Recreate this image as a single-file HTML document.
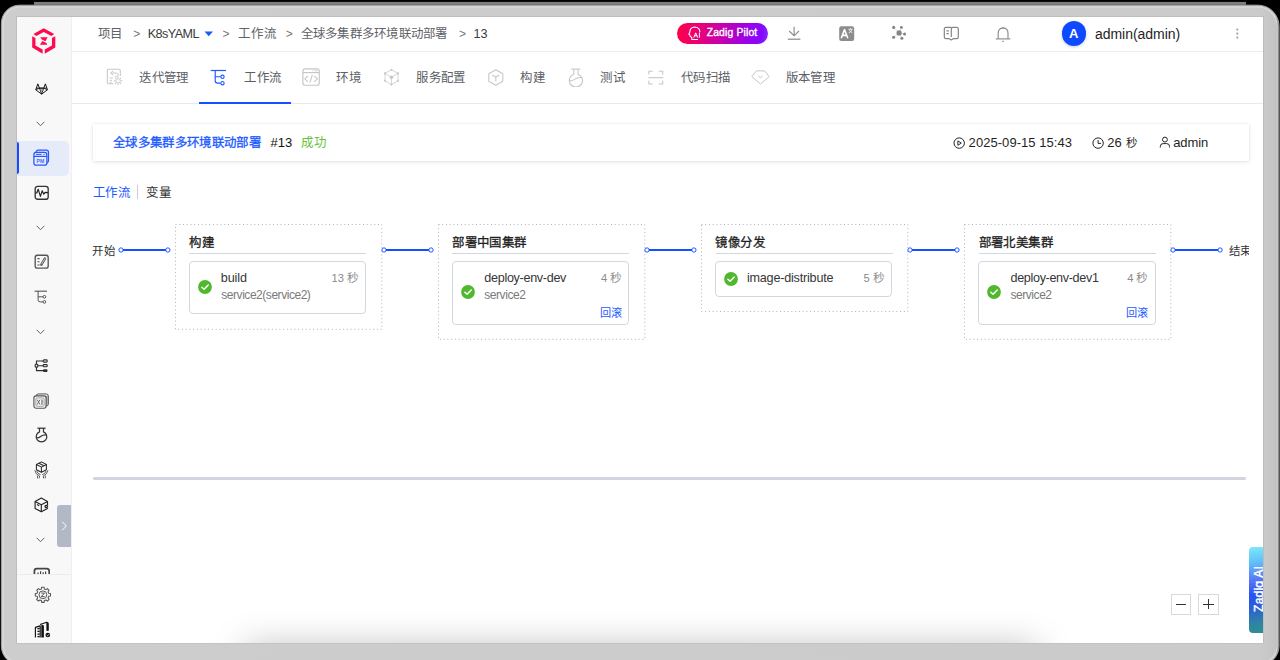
<!DOCTYPE html>
<html lang="zh-CN">
<head>
<meta charset="utf-8">
<title>Zadig - 工作流</title>
<style>
*{box-sizing:border-box;margin:0;padding:0}
html,body{width:1280px;height:660px;overflow:hidden;background:#000;font-family:"Liberation Sans",sans-serif}
#page{position:relative;width:1280px;height:660px;overflow:hidden;background:#000}
.a{position:absolute;display:block}
.t{position:absolute;white-space:nowrap;line-height:20px;height:20px}
.app{left:17px;top:17px;width:1246px;height:626px;background:#fff}
.side{left:17px;top:17px;width:54.5px;height:626px;background:#f8f8f8;border-right:1px solid #efefef}
.job{border:1px solid #d3d7df;border-radius:4px;background:#fff}
.clip{position:absolute;left:71.5px;top:210px;width:1177.8px;height:160px;overflow:hidden}
.clip>.in{position:absolute;left:-71.5px;top:-210px;width:1280px;height:660px}
</style>
</head>
<body>
<div id="page">
<svg class="a" style="left:0;top:0" width="1280" height="660" viewBox="0 0 1280 660">
<defs><linearGradient id="tb" x1="0" y1="0" x2="0" y2="1"><stop offset="0" stop-color="#707070"/><stop offset="0.35" stop-color="#8c8c8c"/><stop offset="1" stop-color="#474747"/></linearGradient>
<linearGradient id="fr" x1="0" y1="0" x2="1" y2="0"><stop offset="0" stop-color="#cdcdcd"/><stop offset="0.985" stop-color="#cbcbcb"/><stop offset="0.9972" stop-color="#c4c4c4"/><stop offset="0.9992" stop-color="#8c8c8c"/><stop offset="1" stop-color="#5a5a5a"/></linearGradient></defs>
<rect x="34" y="1.9" width="1212" height="3.4" fill="url(#tb)"/>
<path d="M19.4 5.2 H1258 A21 21 0 0 1 1279 26.2 V646 A19 19 0 0 1 1260 665 H20.4 A19 19 0 0 1 1.4 646 V23.2 A18 18 0 0 1 19.4 5.2 Z" fill="url(#fr)" stroke="#a6a6a6" stroke-width="1"/>
<path d="M19.5 7.1 H1257.8999999999999 A19.2 19.2 0 0 1 1277.1 26.299999999999997 V645.9 A17.2 17.2 0 0 1 1259.8999999999999 663.1 H20.5 A17.2 17.2 0 0 1 3.3 645.9 V23.299999999999997 A16.2 16.2 0 0 1 19.5 7.1 Z" fill="none" stroke="#d9d9d9" stroke-width="1.4" opacity="0.9"/>
<rect x="16.4" y="16.4" width="1247.2" height="626.7" fill="none" stroke="#b9b9b9" stroke-width="0.7"/>
</svg>
<div class="a app"></div>
<div class="a side"></div>
<!-- shadow of off-screen panel at the bottom -->
<div class="a" style="left:72px;top:600px;width:1191px;height:43px;overflow:hidden"><div style="position:absolute;left:174px;top:46.5px;width:790px;height:40px;box-shadow:0 0 36px rgba(0,0,0,.27)"></div></div>
<!-- top bar / tab bar borders -->
<div class="a" style="left:72px;top:50.6px;width:1191px;height:1px;background:#ebecef"></div>
<div class="a" style="left:72px;top:103px;width:1191px;height:1px;background:#e9eaed"></div>
<div class="a" style="left:198.8px;top:101.6px;width:92.3px;height:2.2px;background:#1450ff"></div>
<!-- info card -->
<div class="a" style="left:92.6px;top:124px;width:1156.7px;height:36.6px;background:#fff;border-radius:1px;box-shadow:0 1px 4px rgba(0,0,0,.10),0 0 2.5px rgba(0,0,0,.07)"></div>
<!-- sub tab divider -->
<div class="a" style="left:136.6px;top:185px;width:1px;height:14px;background:#c8ccd3"></div>
<!-- scroll bar -->
<div class="a" style="left:92.5px;top:476.6px;width:1153.7px;height:3.4px;border-radius:2px;background:#d2d5e1"></div>
<!-- zoom buttons -->
<div class="a" style="left:1170.6px;top:594px;width:20.6px;height:20.6px;border:1px solid #d9d9d9;background:#fff"></div>
<div class="a" style="left:1198.2px;top:594px;width:20.6px;height:20.6px;border:1px solid #d9d9d9;background:#fff"></div>
<div class="a" style="left:1175.6px;top:603.6px;width:10.6px;height:1.3px;background:#333"></div>
<div class="a" style="left:1203.4px;top:603.6px;width:10.4px;height:1.3px;background:#333"></div>
<div class="a" style="left:1207.9px;top:599px;width:1.3px;height:10.4px;background:#333"></div>
<!-- Zadig AI tab -->
<div class="a" style="left:1249px;top:546.8px;width:14px;height:86.6px;border-radius:4px 0 0 4px;background:linear-gradient(172deg,#7ceaf8 0%,#62c0f9 18%,#5a78f7 38%,#2852f2 55%,#2b5fd6 70%,#2f84a2 88%,#2e8e92 100%);overflow:hidden"><div style="position:absolute;left:-33.2px;top:34px;width:86.6px;height:16px;line-height:16px;transform:rotate(-90deg);color:#fff;font-weight:400;-webkit-text-stroke:0.45px #fff;font-size:12.3px;letter-spacing:0.1px;text-align:center;white-space:nowrap" id="zai">Zadig AI</div></div>
<!-- sidebar expand handle -->
<div class="a" style="left:57px;top:504.8px;width:14px;height:42px;border-radius:3px 0 0 3px;background:#b3b8c6"></div>
<svg class="a" style="left:60px;top:520px" width="9" height="12" viewBox="0 0 9 12"><path d="M2.3 1.8 L6.3 6 L2.3 10.2" fill="none" stroke="#fff" stroke-width="1" /></svg>
<!-- workflow area (clipped) -->
<div class="clip"><div class="in">
<svg class="a" style="left:173.5px;top:222.7px" width="209.3" height="107.8"><rect x="1.5" y="1.5" width="206.3" height="104.8" fill="none" stroke="#aeb3bd" stroke-width="1" stroke-dasharray="1 2.75"/></svg>
<div class="a" style="left:189.4px;top:253px;width:177px;height:1px;background:#d3d7e0"></div>
<div class="a job" style="left:189.20000000000002px;top:260.6px;width:177.2px;height:53.800000000000004px"></div>
<svg class="a" style="left:198.0px;top:280.20000000000005px" width="14" height="14" viewBox="0 0 14 14"><circle cx="7" cy="7" r="6.9" fill="#4fb82c"/><path d="M3.9 7.2 L6.1 9.3 L10.2 5" fill="none" stroke="#fff" stroke-width="1.5" stroke-linecap="round" stroke-linejoin="round"/></svg>
<svg class="a" style="left:436.5px;top:222.7px" width="209.3" height="117.8"><rect x="1.5" y="1.5" width="206.3" height="114.8" fill="none" stroke="#aeb3bd" stroke-width="1" stroke-dasharray="1 2.75"/></svg>
<div class="a" style="left:452.4px;top:253px;width:177px;height:1px;background:#d3d7e0"></div>
<div class="a job" style="left:452.2px;top:260.6px;width:177.2px;height:64.39999999999999px"></div>
<svg class="a" style="left:461.0px;top:285.40000000000003px" width="14" height="14" viewBox="0 0 14 14"><circle cx="7" cy="7" r="6.9" fill="#4fb82c"/><path d="M3.9 7.2 L6.1 9.3 L10.2 5" fill="none" stroke="#fff" stroke-width="1.5" stroke-linecap="round" stroke-linejoin="round"/></svg>
<svg class="a" style="left:699.6px;top:222.7px" width="209.3" height="90"><rect x="1.5" y="1.5" width="206.3" height="87" fill="none" stroke="#aeb3bd" stroke-width="1" stroke-dasharray="1 2.75"/></svg>
<div class="a" style="left:715.5px;top:253px;width:177px;height:1px;background:#d3d7e0"></div>
<div class="a job" style="left:715.3px;top:260.6px;width:177.2px;height:36.6px"></div>
<svg class="a" style="left:724.1px;top:271.6px" width="14" height="14" viewBox="0 0 14 14"><circle cx="7" cy="7" r="6.9" fill="#4fb82c"/><path d="M3.9 7.2 L6.1 9.3 L10.2 5" fill="none" stroke="#fff" stroke-width="1.5" stroke-linecap="round" stroke-linejoin="round"/></svg>
<svg class="a" style="left:962.7px;top:222.7px" width="209.3" height="117.8"><rect x="1.5" y="1.5" width="206.3" height="114.8" fill="none" stroke="#aeb3bd" stroke-width="1" stroke-dasharray="1 2.75"/></svg>
<div class="a" style="left:978.6px;top:253px;width:177px;height:1px;background:#d3d7e0"></div>
<div class="a job" style="left:978.4px;top:260.6px;width:177.2px;height:64.39999999999999px"></div>
<svg class="a" style="left:987.2px;top:285.40000000000003px" width="14" height="14" viewBox="0 0 14 14"><circle cx="7" cy="7" r="6.9" fill="#4fb82c"/><path d="M3.9 7.2 L6.1 9.3 L10.2 5" fill="none" stroke="#fff" stroke-width="1.5" stroke-linecap="round" stroke-linejoin="round"/></svg>
<svg class="a" style="left:116.6px;top:245px" width="54.900000000000006" height="10"><line x1="4" y1="5" x2="50.900000000000006" y2="5" stroke="#1450ff" stroke-width="2"/><circle cx="4" cy="5" r="2.15" fill="#fff" stroke="#1450ff" stroke-width="0.95"/><circle cx="50.900000000000006" cy="5" r="2.15" fill="#fff" stroke="#1450ff" stroke-width="0.95"/></svg>
<svg class="a" style="left:379.7px;top:245px" width="55.0" height="10"><line x1="4" y1="5" x2="51.0" y2="5" stroke="#1450ff" stroke-width="2"/><circle cx="4" cy="5" r="2.15" fill="#fff" stroke="#1450ff" stroke-width="0.95"/><circle cx="51.0" cy="5" r="2.15" fill="#fff" stroke="#1450ff" stroke-width="0.95"/></svg>
<svg class="a" style="left:642.9px;top:245px" width="54.89999999999998" height="10"><line x1="4" y1="5" x2="50.89999999999998" y2="5" stroke="#1450ff" stroke-width="2"/><circle cx="4" cy="5" r="2.15" fill="#fff" stroke="#1450ff" stroke-width="0.95"/><circle cx="50.89999999999998" cy="5" r="2.15" fill="#fff" stroke="#1450ff" stroke-width="0.95"/></svg>
<svg class="a" style="left:906px;top:245px" width="55" height="10"><line x1="4" y1="5" x2="51" y2="5" stroke="#1450ff" stroke-width="2"/><circle cx="4" cy="5" r="2.15" fill="#fff" stroke="#1450ff" stroke-width="0.95"/><circle cx="51" cy="5" r="2.15" fill="#fff" stroke="#1450ff" stroke-width="0.95"/></svg>
<svg class="a" style="left:1169.1px;top:245px" width="55.100000000000136" height="10"><line x1="4" y1="5" x2="51.100000000000136" y2="5" stroke="#1450ff" stroke-width="2"/><circle cx="4" cy="5" r="2.15" fill="#fff" stroke="#1450ff" stroke-width="0.95"/><circle cx="51.100000000000136" cy="5" r="2.15" fill="#fff" stroke="#1450ff" stroke-width="0.95"/></svg>
</div></div>
<div class="a" style="left:17px;top:140.8px;width:52.2px;height:35px;background:#e6ebf9;border-radius:0 5px 5px 0"></div>
<div class="a" style="left:17.2px;top:142.4px;width:2.1px;height:31.6px;background:#1a4cff;border-radius:0 2px 2px 0"></div>
<div class="a" style="left:17px;top:573.6px;width:54px;height:1px;background:#ececec"></div>
<svg class="a" style="left:32px;top:28.1px" width="23.6" height="26.2" viewBox="0 0 24 26.2"><g fill="#ff0a4e">
<path d="M11.9 0 L22.6 5.9 L19.7 7.8 L11.9 3.9 L4.4 7.8 L1.5 5.9 Z"/>
<path d="M0.2 8.1 L3.5 9.9 L3.5 17.6 L10.8 21.7 L10.8 25.9 L0.2 19.5 Z"/>
<path d="M23.7 8.1 L20.3 9.9 L20.3 17.6 L13 21.7 L13 25.9 L23.7 19.5 Z"/>
<path d="M8.4 9.2 L15.8 9.2 L13.8 13.2 L10 11.6 Z"/>
<path d="M8.1 16.9 L15.6 16.9 L14.6 15 L10.6 12.9 Z"/>
</g></svg>
<svg class="a" style="left:34.7px;top:83px" width="13.3" height="12" viewBox="0 0 14 12.6"><g fill="none" stroke="#151515" stroke-width="1.05" stroke-linejoin="round">
<path d="M3 0.9 L0.8 7.1 L6.95 11.7 L13.1 7.1 L10.9 0.9 L9.2 5.4 L4.7 5.4 Z"/>
<path d="M1.4 5.4 H12.5 M4.7 5.4 L6.95 11.7 L9.2 5.4 M0.8 7.1 L4.7 5.4 M13.1 7.1 L9.2 5.4" stroke-width="0.9"/></g>
<path d="M5.6 6.4 H8.3 L6.95 10 Z" fill="#151515" opacity="0.35"/></svg>
<svg class="a" style="left:36px;top:121px" width="9" height="6" viewBox="0 0 9 6"><path d="M0.7 0.8 L4.5 4.7 L8.3 0.8" fill="none" stroke="#5c5c5c" stroke-width="0.95"/></svg>
<svg class="a" style="left:36px;top:225px" width="9" height="6" viewBox="0 0 9 6"><path d="M0.7 0.8 L4.5 4.7 L8.3 0.8" fill="none" stroke="#5c5c5c" stroke-width="0.95"/></svg>
<svg class="a" style="left:36px;top:329px" width="9" height="6" viewBox="0 0 9 6"><path d="M0.7 0.8 L4.5 4.7 L8.3 0.8" fill="none" stroke="#5c5c5c" stroke-width="0.95"/></svg>
<svg class="a" style="left:36px;top:537px" width="9" height="6" viewBox="0 0 9 6"><path d="M0.7 0.8 L4.5 4.7 L8.3 0.8" fill="none" stroke="#5c5c5c" stroke-width="0.95"/></svg>
<svg class="a" style="left:32.6px;top:149.2px" width="17.4" height="17.4" viewBox="0 0 17.4 17.4"><rect x="2.9" y="1.2" width="12.6" height="12.4" rx="2.2" fill="none" stroke="#2457ff" stroke-width="1.2"/>
<rect x="0.9" y="3.4" width="13" height="12.8" rx="2.2" fill="#e6ebf9" stroke="#2457ff" stroke-width="1.25"/>
<path d="M0.9 7.4 H13.9" stroke="#2457ff" stroke-width="1.2"/>
<path d="M3 5.4 H8.6" stroke="#2457ff" stroke-width="1"/><circle cx="11" cy="5.4" r="0.6" fill="#2457ff"/>
<text x="7.4" y="14.3" font-family="Liberation Sans, sans-serif" font-weight="700" font-size="5.1" text-anchor="middle" fill="#2457ff" opacity="0.85">PM</text></svg>
<svg class="a" style="left:33.6px;top:185px" width="15.4" height="15.6" viewBox="0 0 15.4 15.6"><rect x="1.2" y="1.3" width="13" height="13" rx="2.4" fill="none" stroke="#333" stroke-width="1.35"/>
<path d="M1.3 8 L2.8 8 L4.2 4.2 L6.4 11.4 L8.2 5.8 L9.8 9.2 L11 7.4 L14 7.6" fill="none" stroke="#222" stroke-width="1.15" stroke-linejoin="round"/></svg>
<svg class="a" style="left:33.6px;top:254.4px" width="15.4" height="15.6" viewBox="0 0 15.4 15.6"><rect x="1.2" y="1.2" width="13" height="13" rx="2.2" fill="none" stroke="#555" stroke-width="1.35"/>
<path d="M3.4 4.6 H5.6 M3.4 7.8 H5.6 M3.4 11 H5.6" stroke="#555" stroke-width="1.1"/>
<path d="M10.9 4.6 L7.4 10.6" stroke="#555" stroke-width="2.5" stroke-linecap="round"/>
<path d="M10.9 4.6 L7.8 9.9" stroke="#f8f8f8" stroke-width="0.7" stroke-linecap="round"/></svg>
<svg class="a" style="left:34.4px;top:289.6px" width="14" height="14" viewBox="0 0 14 14"><path d="M0.6 1.2 H13" stroke="#555" stroke-width="1.1"/>
<path d="M4.1 1.2 V9.8 Q4.1 11.9 6.2 11.9 H9 M4.1 6.8 H9" fill="none" stroke="#555" stroke-width="1"/>
<circle cx="10.4" cy="6.8" r="1.35" fill="none" stroke="#555" stroke-width="1"/>
<circle cx="10.4" cy="11.9" r="1.35" fill="none" stroke="#555" stroke-width="1"/></svg>
<svg class="a" style="left:34.4px;top:359.4px" width="14.4" height="14" viewBox="0 0 14.4 14"><g fill="none" stroke="#2e2e2e" stroke-width="1.12">
<rect x="1.2" y="5.3" width="2.6" height="2.8" rx="0.6"/>
<path d="M2.5 5.3 V2 H9 M3.8 6.7 H9 M2.5 8.1 V11.6 H9"/>
<rect x="9.2" y="0.9" width="4" height="2.2" rx="0.8"/>
<rect x="9.2" y="5.6" width="4" height="2.2" rx="0.8"/>
</g><rect x="9" y="10.2" width="4.5" height="2.9" rx="1" fill="#2e2e2e"/></svg>
<svg class="a" style="left:33.4px;top:392.6px" width="16.4" height="16.4" viewBox="0 0 16.4 16.4"><rect x="3.2" y="0.9" width="12.2" height="12.2" rx="2.2" fill="#e4e4e4" stroke="#555" stroke-width="0.95"/>
<path d="M13.4 3 V12.6 M14.4 2.4 V11.6" stroke="#8a8a8a" stroke-width="0.6"/>
<rect x="0.9" y="2.9" width="12.2" height="12.4" rx="2.2" fill="#f8f8f8" stroke="#555" stroke-width="1.15"/>
<rect x="2.9" y="4.9" width="8.2" height="8.4" rx="1.2" fill="none" stroke="#8a8a8a" stroke-width="0.8"/>
<path d="M4.2 6.6 L7 11.6 M7 6.6 L4.2 11.6" stroke="#6a6a6a" stroke-width="1"/><path d="M9 6.4 V11.8" stroke="#6a6a6a" stroke-width="1.2"/></svg>
<svg class="a" style="left:35px;top:427.4px" width="13" height="16.4" viewBox="0 0 13 16.4"><g fill="none" stroke="#333" stroke-width="1.25">
<path d="M2.4 1.2 H10.6"/>
<path d="M4.5 1.2 V4.8 A5.3 5.3 0 1 0 8.5 4.8 V1.2"/>
<path d="M1.4 10.9 Q4 10.9 6 9.2 T11.4 7.8"/></g></svg>
<svg class="a" style="left:34px;top:461px" width="15" height="18" viewBox="0 0 15 18"><g fill="none" stroke="#2a2a2a" stroke-width="1.05" stroke-linejoin="round">
<path d="M7.4 0.9 L12.4 3.5 V8.7 L7.4 11.3 L2.4 8.7 V3.5 Z"/>
<path d="M2.4 3.5 L7.4 6.1 L12.4 3.5 M7.4 6.1 V11.3 M4.9 2.2 L9.9 4.8"/></g>
<g fill="none" stroke="#555" stroke-width="0.95" stroke-linecap="round">
<path d="M0.9 9.6 Q1.6 13.6 5.6 15 L5.2 17 M2.8 10.4 Q3.6 12.8 6.2 13.6 M3.4 15 L3.6 17"/>
<path d="M13.9 9.6 Q13.2 13.6 9.2 15 L9.6 17 M12 10.4 Q11.2 12.8 8.6 13.6 M11.4 15 L11.2 17"/></g></svg>
<svg class="a" style="left:34.2px;top:496.8px" width="15" height="16" viewBox="0 0 15 16"><g fill="none" stroke="#222" stroke-width="1.15" stroke-linejoin="round">
<path d="M7.3 1 L13.5 4.4 V11.4 L7.3 14.8 L1.1 11.4 V4.4 Z"/>
<path d="M1.1 4.4 L7.3 7.8 L13.5 4.4 M7.3 7.8 V14.8 M3 7.6 L5.2 8.8"/></g>
<circle cx="12.2" cy="9.6" r="1.9" fill="#f8f8f8"/><circle cx="12.2" cy="9.6" r="1.25" fill="none" stroke="#111" stroke-width="1.1"/></svg>
<svg class="a" style="left:32.6px;top:566.6px" width="17.6" height="7" viewBox="0 0 17.6 7"><rect x="1.4" y="1.6" width="14.8" height="12" rx="2.4" fill="none" stroke="#444" stroke-width="1.7"/>
<path d="M5 5.6 V7 M7.6 4.2 V7 M10.2 5.2 V7 M12.6 4.6 V7" stroke="#444" stroke-width="1.2"/></svg>
<svg class="a" style="left:34.4px;top:586.4px" width="17.2" height="17.2" viewBox="0 0 17.2 17.2"><path d="M7.70 1.19 L10.10 1.19 L10.39 2.99 L11.95 3.64 L13.43 2.57 L15.13 4.27 L14.06 5.75 L14.71 7.31 L16.51 7.60 L16.51 10.00 L14.71 10.29 L14.06 11.85 L15.13 13.33 L13.43 15.03 L11.95 13.96 L10.39 14.61 L10.10 16.41 L7.70 16.41 L7.41 14.61 L5.85 13.96 L4.37 15.03 L2.67 13.33 L3.74 11.85 L3.09 10.29 L1.29 10.00 L1.29 7.60 L3.09 7.31 L3.74 5.75 L2.67 4.27 L4.37 2.57 L5.85 3.64 L7.41 2.99 Z" fill="none" stroke="#555" stroke-width="1.05" stroke-linejoin="round"/>
<circle cx="8.9" cy="8.8" r="3.9" fill="none" stroke="#555" stroke-width="1"/>
<path d="M7.2 7.1 H10.6 L7.2 10.6 H10.6" fill="none" stroke="#444" stroke-width="0.9"/></svg>
<svg class="a" style="left:30px;top:618px" width="26" height="24" viewBox="0 0 26 24"><g fill="none" stroke="#111" stroke-linejoin="round">
<path d="M5.4 19.4 V9.4 L10.2 7.9 V19.4" stroke-width="1.15"/>
<path d="M7.4 10.8 L9.6 10.3 M7.4 13.4 H9.6 M7.4 16 H9.6 M7.4 18.6 H9.6" stroke-width="1.25"/>
<path d="M10 6.5 L16 4.4 Q18 4 18 6 V12.6" stroke-width="1.1"/>
</g>
<g fill="#111"><path d="M11.3 6.6 L13.9 7.6 V19.4 H11.3 Z"/><path d="M16.4 4.6 H18.5 V12.8 H16.4 Z"/><circle cx="17.8" cy="17" r="2.35"/></g>
<path d="M16.6 17 L17.5 17.9 L19.1 16.2" fill="none" stroke="#f8f8f8" stroke-width="0.8"/></svg><svg class="a" style="left:204.4px;top:30.8px" width="10" height="7" viewBox="0 0 10 7"><path d="M0.5 0.6 H9 L4.75 5.3 Z" fill="#1a5aff"/></svg>
<div class="a" style="left:676.8px;top:22.7px;width:91.3px;height:21.1px;border-radius:11px;background:linear-gradient(97deg,#ff0046 0%,#f0006a 18%,#cc00a4 45%,#a100e0 72%,#8408ff 92%,#8a2aff 100%)"></div>
<svg class="a" style="left:687.6px;top:25.8px" width="13.4" height="15" viewBox="0 0 13.4 15"><path d="M9.6 13.6 H3.8 V11.4 Q1.9 10.6 1.6 8.6 L0.8 8.3 L1.8 6.2 Q1.9 1 6.6 0.9 Q11.6 1 11.9 5.8" fill="none" stroke="#fff" stroke-width="1.05" stroke-linejoin="round" stroke-linecap="round"/>
<path d="M5.9 11.3 L7.7 6.9 L9.5 11.3 M6.6 9.8 H8.8 M11.4 7 V11.3" fill="none" stroke="#fff" stroke-width="1" stroke-linecap="round" stroke-linejoin="round"/></svg>
<svg class="a" style="left:787px;top:26.2px" width="14.4" height="14.4" viewBox="0 0 14.4 14.4"><path d="M7.1 0.8 V9.6 M2.2 5 L7.1 9.8 L12 5" fill="none" stroke="#8a8a8a" stroke-width="1.15"/><path d="M0.8 13.2 H13.4" stroke="#8a8a8a" stroke-width="1.2"/></svg>
<svg class="a" style="left:839px;top:25.8px" width="15.6" height="15.4" viewBox="0 0 15.6 15.4"><rect x="0.2" y="0.2" width="15" height="14.8" rx="2.2" fill="#8c8c8c"/>
<path d="M2.2 12.2 L5.5 3.6 L8.8 12.2 M3.3 9.4 H7.7" fill="none" stroke="#fff" stroke-width="1.55" stroke-linejoin="round"/>
<path d="M9.6 3.2 H13.6 M11.6 2.2 V3.2 M10 3.4 Q11.4 6.4 13.4 6.8 M13.2 3.4 Q11.8 6.4 9.8 6.8" fill="none" stroke="#fff" stroke-width="0.75"/></svg>
<svg class="a" style="left:891px;top:25.4px" width="16" height="16" viewBox="0 0 16 16"><g stroke="#b5b5b5" stroke-width="0.5"><path d="M8.1 7.9 L2.7 2.4 M8.1 7.9 L10.4 2.4 M8.1 7.9 L13.6 9 M8.1 7.9 L10.9 13.3 M8.1 7.9 L2.6 12.3"/></g>
<g fill="#858585"><circle cx="8.1" cy="7.9" r="2.6"/><circle cx="2.7" cy="2.4" r="1.55"/><circle cx="10.4" cy="2.4" r="1.45"/><circle cx="13.6" cy="9" r="1.55"/><circle cx="10.9" cy="13.3" r="1.55"/><circle cx="2.6" cy="12.3" r="1.55"/></g></svg>
<svg class="a" style="left:942.8px;top:26px" width="17" height="15.4" viewBox="0 0 17 15.4"><g fill="none" stroke="#858585" stroke-width="1.2" stroke-linejoin="round">
<path d="M8.3 1.4 H3 Q1.3 1.4 1.3 3.1 V11 Q1.3 12.7 3 12.7 H6.3 L8.3 14 L10.3 12.7 H13.6 Q15.3 12.7 15.3 11 V3.1 Q15.3 1.4 13.6 1.4 H10 Q8.3 1.4 8.3 3.1 V11"/>
<path d="M3.4 4.9 H5.8 M3.4 7.6 H5.8" stroke-width="1.1"/></g></svg>
<svg class="a" style="left:995.2px;top:26px" width="16.4" height="16.4" viewBox="0 0 16.4 16.4"><g fill="none" stroke="#8c8c8c" stroke-width="1.15">
<path d="M3.2 12.7 V7.2 Q3.2 2.2 8.1 2.2 Q13 2.2 13 7.2 V12.7"/><path d="M0.8 12.9 H15.4"/></g>
<circle cx="8.1" cy="1.5" r="0.8" fill="#8c8c8c"/><path d="M7.2 15.3 H9" stroke="#8c8c8c" stroke-width="1"/></svg>
<div class="a" style="left:1061.8px;top:21.4px;width:24.4px;height:24.4px;border-radius:50%;background:#0f49ff;box-shadow:0 1px 3px rgba(40,60,120,.25)"></div>
<svg class="a" style="left:1235px;top:27px" width="5" height="14" viewBox="0 0 5 14"><g fill="#a2a2a2"><circle cx="2.3" cy="2.6" r="1.1"/><circle cx="2.3" cy="6.6" r="1.1"/><circle cx="2.3" cy="10.6" r="1.1"/></g></svg>
<svg class="a" style="left:953.4px;top:136.6px" width="12.4" height="12.4" viewBox="0 0 12.4 12.4"><circle cx="6.2" cy="6.1" r="5.2" fill="none" stroke="#222" stroke-width="1"/><path d="M4.9 3.9 L8.3 6.1 L4.9 8.3 Z" fill="none" stroke="#222" stroke-width="0.95" stroke-linejoin="round"/></svg>
<svg class="a" style="left:1092.4px;top:136.6px" width="12.4" height="12.4" viewBox="0 0 12.4 12.4"><circle cx="6.1" cy="6.1" r="5.2" fill="none" stroke="#222" stroke-width="1"/><path d="M6.1 3 V6.4 H9" fill="none" stroke="#222" stroke-width="1"/></svg>
<svg class="a" style="left:1159px;top:136px" width="12" height="12.4" viewBox="0 0 12 12.4"><circle cx="5.9" cy="3.6" r="2.45" fill="none" stroke="#222" stroke-width="1"/><path d="M1.3 11.6 V10.4 Q1.3 7.6 4.1 7.6 H7.7 Q10.5 7.6 10.5 10.4 V11.6" fill="none" stroke="#222" stroke-width="1"/></svg>
<svg class="a" style="left:106px;top:68.4px" width="17" height="17.4" viewBox="0 0 17 17.4"><g fill="none" stroke="#c6c6c6" stroke-width="1.05" stroke-linejoin="round">
<path d="M7.4 15.8 H2.6 Q1.3 15.8 1.3 14.5 V2.6 Q1.3 1.3 2.6 1.3 H13 Q14.3 1.3 14.3 2.6 V8"/>
<path d="M7.4 2.8 L4.6 5 L7.4 7.2 M4.8 5 H10 Q12.2 5 12.2 7 Q12.2 8.6 10.4 8.6 H8.6" stroke-width="0.95"/>
<path d="M3.6 10 H7 M3.6 12.3 H6 M3.6 14.2 H5.6" stroke-width="0.95"/>
<path d="M14.80 12.90 L16.20 12.90 M14.01 14.81 L15.00 15.80 M12.10 15.60 L12.10 17.00 M10.19 14.81 L9.20 15.80 M9.40 12.90 L8.00 12.90 M10.19 10.99 L9.20 10.00 M12.10 10.20 L12.10 8.80 M14.01 10.99 L15.00 10.00" stroke-width="1.1"/></g><circle cx="12.1" cy="12.9" r="2.2" fill="none" stroke="#c6c6c6" stroke-width="0.9"/></svg>
<svg class="a" style="left:210.4px;top:68.8px" width="17" height="17.4" viewBox="0 0 17 17.4"><path d="M0.7 1.5 H16" stroke="#1a5aff" stroke-width="1.2"/>
<path d="M5.2 1.5 V11.8 Q5.2 14.2 7.6 14.2 H10.6 M5.2 7.8 H10.6" fill="none" stroke="#1a5aff" stroke-width="1.15"/>
<circle cx="12.5" cy="7.8" r="1.65" fill="none" stroke="#1a5aff" stroke-width="1.1"/>
<circle cx="12.5" cy="14.2" r="1.65" fill="none" stroke="#1a5aff" stroke-width="1.1"/></svg>
<svg class="a" style="left:302px;top:68.2px" width="18.4" height="18.4" viewBox="0 0 18.4 18.4"><g fill="none" stroke="#c6c6c6" stroke-width="1.15" stroke-linejoin="round">
<rect x="0.9" y="0.9" width="16.4" height="16.4" rx="2.4"/><path d="M0.9 4.6 H17.3"/>
<path d="M6 7.8 L2.8 10.8 L6 13.8 M12.2 7.8 L15.4 10.8 L12.2 13.8 M10.4 7 L7.8 14.6" stroke-width="1.05"/></g>
<path d="M10.2 2.8 H11.2 M12.6 2.8 H15.4" stroke="#c6c6c6" stroke-width="0.9"/></svg>
<svg class="a" style="left:382.6px;top:68.2px" width="17.2" height="18.4" viewBox="0 0 17.2 18.4"><g fill="none" stroke="#c6c6c6" stroke-width="0.75">
<path d="M8.5 1.8 L15 5.4 V12.8 L8.5 16.6 L2 12.8 V5.4 Z"/><path d="M2 5.4 L8.5 9.2 L15 5.4 M8.5 9.2 V16.6"/></g>
<g fill="#c6c6c6"><circle cx="8.5" cy="1.8" r="1.05"/><circle cx="15" cy="5.4" r="1.05"/><circle cx="15" cy="12.8" r="1.05"/><circle cx="8.5" cy="16.6" r="1.05"/><circle cx="2" cy="12.8" r="1.05"/><circle cx="2" cy="5.4" r="1.05"/><circle cx="8.5" cy="9.2" r="1.7"/></g></svg>
<svg class="a" style="left:488.2px;top:69.2px" width="15.6" height="17" viewBox="0 0 15.6 17"><g fill="none" stroke="#c6c6c6" stroke-width="1.05" stroke-linejoin="round">
<path d="M7.8 0.8 L14.8 4.7 V12.3 L7.8 16.2 L0.8 12.3 V4.7 Z"/><path d="M4.4 6 L7.8 8.2 L11.2 6 M7.8 8.2 V12.4"/></g></svg>
<svg class="a" style="left:567.8px;top:67.6px" width="16" height="19.4" viewBox="0 0 16 19.4"><g fill="none" stroke="#c6c6c6" stroke-width="1.05">
<path d="M3.2 1.1 H12.4"/><path d="M5.8 1.1 V6.2 A6.6 6.6 0 1 0 10 6.2 V1.1"/>
<path d="M1.4 12.8 Q4.4 13.2 7 11.2 T14.2 9.6"/></g></svg>
<svg class="a" style="left:648px;top:69.6px" width="15.6" height="15.4" viewBox="0 0 15.6 15.4"><g fill="none" stroke="#c6c6c6" stroke-width="1.1">
<path d="M0.9 4.4 V1.2 H4.8 M10.8 1.2 H14.7 V4.4 M14.7 10.8 V14 H10.8 M4.8 14 H0.9 V10.8"/><path d="M0.4 7.7 H15.2"/></g></svg>
<svg class="a" style="left:751px;top:70px" width="19" height="15" viewBox="0 0 19 15"><g fill="none" stroke="#c6c6c6" stroke-width="1" stroke-linejoin="round">
<path d="M5.4 0.9 H13.6 L18.2 6.6 L9.5 14 L0.8 6.6 Z"/><path d="M7.2 5.8 L9.5 7.9 L11.8 5.8"/></g></svg>
<div class="t" id="bc1" style="left:97.63px;top:23.7px;font-size:12.45px;color:#606266;width:24.0px;text-align:justify;text-align-last:justify;text-justify:inter-character;">项目</div>
<div class="t" id="bc1s" style="left:133.14px;top:23.5px;font-size:12px;color:#777;">&gt;</div>
<div class="t" id="bc2" style="left:147.7px;top:23.5px;font-size:12.6px;color:#3a3a3a;letter-spacing:-0.544px;">K8sYAML</div>
<div class="t" id="bc2s" style="left:222.44px;top:23.5px;font-size:12px;color:#777;">&gt;</div>
<div class="t" id="bc3" style="left:237.54px;top:23.7px;font-size:12.45px;color:#606266;width:38.0px;text-align:justify;text-align-last:justify;text-justify:inter-character;">工作流</div>
<div class="t" id="bc3s" style="left:285.64px;top:23.5px;font-size:12px;color:#777;">&gt;</div>
<div class="t" id="bc4" style="left:300.7px;top:23.7px;font-size:12.45px;color:#606266;width:146.8px;text-align:justify;text-align-last:justify;text-justify:inter-character;">全球多集群多环境联动部署</div>
<div class="t" id="bc4s" style="left:458.94px;top:23.5px;font-size:12px;color:#777;">&gt;</div>
<div class="t" id="bc5" style="left:473.5px;top:23.5px;font-size:12.6px;color:#3a3a3a;">13</div>
<div class="t" id="pilot" style="left:706.68px;top:23.3px;font-size:10.4px;color:#fff;letter-spacing:0.148px;-webkit-text-stroke:0.35px #fff;">Zadig Pilot</div>
<div class="t" id="avA" style="left:1069.11px;top:23.6px;font-size:13px;color:#fff;font-weight:700;">A</div>
<div class="t" id="admin" style="left:1094.94px;top:23.5px;font-size:14px;color:#1f1f1f;letter-spacing:-0.035px;">admin(admin)</div>
<div class="t" id="tb1" style="left:139.38px;top:67.6px;font-size:12.45px;color:#5a5e66;width:49.0px;text-align:justify;text-align-last:justify;text-justify:inter-character;">迭代管理</div>
<div class="t" id="tb2" style="left:244.04px;top:67.6px;font-size:12.45px;color:#5a5e66;width:37.3px;text-align:justify;text-align-last:justify;text-justify:inter-character;">工作流</div>
<div class="t" id="tb3" style="left:336.41px;top:67.6px;font-size:12.45px;color:#5a5e66;width:24.4px;text-align:justify;text-align-last:justify;text-justify:inter-character;">环境</div>
<div class="t" id="tb4" style="left:416.12px;top:67.6px;font-size:12.45px;color:#5a5e66;width:49.3px;text-align:justify;text-align-last:justify;text-justify:inter-character;">服务配置</div>
<div class="t" id="tb5" style="left:520.48px;top:67.6px;font-size:12.45px;color:#5a5e66;width:24.9px;text-align:justify;text-align-last:justify;text-justify:inter-character;">构建</div>
<div class="t" id="tb6" style="left:600.34px;top:67.6px;font-size:12.45px;color:#5a5e66;width:24.9px;text-align:justify;text-align-last:justify;text-justify:inter-character;">测试</div>
<div class="t" id="tb7" style="left:680.94px;top:67.6px;font-size:12.45px;color:#5a5e66;width:49.3px;text-align:justify;text-align-last:justify;text-justify:inter-character;">代码扫描</div>
<div class="t" id="tb8" style="left:785.57px;top:67.6px;font-size:12.45px;color:#5a5e66;width:49.2px;text-align:justify;text-align-last:justify;text-justify:inter-character;">版本管理</div>
<div class="t" id="cd1" style="left:112.99px;top:133.2px;font-size:12.45px;color:#1a5aff;-webkit-text-stroke:0.3px #1a5aff;width:147.6px;text-align:justify;text-align-last:justify;text-justify:inter-character;">全球多集群多环境联动部署</div>
<div class="t" id="cd2" style="left:270.54px;top:133px;font-size:13px;color:#111;">#13</div>
<div class="t" id="cd3" style="left:301.46px;top:133.2px;font-size:12.45px;color:#67c23a;width:25.0px;text-align:justify;text-align-last:justify;text-justify:inter-character;">成功</div>
<div class="t" id="cd4" style="left:968.61px;top:132.6px;font-size:13px;color:#1f1f1f;letter-spacing:0.048px;">2025-09-15 15:43</div>
<div class="t" id="cd5" style="left:1107.31px;top:132.6px;font-size:13px;color:#1f1f1f;">26</div>
<div class="t" id="cd5b" style="left:1125.54px;top:132.7px;font-size:11.4px;color:#1f1f1f;">秒</div>
<div class="t" id="cd6" style="left:1173.18px;top:132.6px;font-size:13px;color:#1f1f1f;letter-spacing:-0.063px;">admin</div>
<div class="t" id="st1" style="left:92.54px;top:183px;font-size:12.45px;color:#1a5aff;width:37.0px;text-align:justify;text-align-last:justify;text-justify:inter-character;">工作流</div>
<div class="t" id="st2" style="left:145.78px;top:183px;font-size:12.45px;color:#303133;width:24.8px;text-align:justify;text-align-last:justify;text-justify:inter-character;">变量</div>
<div class="t" id="wf0" style="left:92.47px;top:240.6px;font-size:11.4px;color:#303133;width:22.5px;text-align:justify;text-align-last:justify;text-justify:inter-character;">开始</div>
<div class="t" id="wf9" style="left:1229.08px;top:240.6px;font-size:11.4px;color:#303133;width:19.9px;overflow:hidden;">结束</div>
<div class="t" id="s0t" style="left:189.33px;top:232.9px;font-size:12.45px;color:#1f1f1f;-webkit-text-stroke:0.3px #1f1f1f;width:25.0px;text-align:justify;text-align-last:justify;text-justify:inter-character;">构建</div>
<div class="t" id="s0n" style="left:220.8px;top:267.8px;font-size:12.6px;color:#363636;letter-spacing:-0.095px;">build</div>
<div class="t" id="s0d2" style="left:346.64px;top:267.9px;font-size:11.6px;color:#8a8a8a;">秒</div>
<div class="t" id="s0d1" style="left:331.62px;top:267.8px;font-size:11.2px;color:#8a8a8a;">13</div>
<div class="t" id="s0s" style="left:221.31px;top:285.0px;font-size:12px;color:#7a7a7a;letter-spacing:-0.458px;">service2(service2)</div>
<div class="t" id="s1t" style="left:452.31px;top:232.9px;font-size:12.45px;color:#1f1f1f;-webkit-text-stroke:0.3px #1f1f1f;width:74.0px;text-align:justify;text-align-last:justify;text-justify:inter-character;">部署中国集群</div>
<div class="t" id="s1n" style="left:484.32px;top:267.8px;font-size:12.6px;color:#363636;letter-spacing:-0.308px;">deploy-env-dev</div>
<div class="t" id="s1d2" style="left:609.64px;top:267.9px;font-size:11.6px;color:#8a8a8a;">秒</div>
<div class="t" id="s1d1" style="left:600.98px;top:267.8px;font-size:11.2px;color:#8a8a8a;">4</div>
<div class="t" id="s1s" style="left:484.31px;top:285.0px;font-size:12px;color:#7a7a7a;letter-spacing:-0.45px;">service2</div>
<div class="t" id="s1r" style="left:599.9px;top:302.5px;font-size:11.2px;color:#1a5aff;width:21.6px;text-align:justify;text-align-last:justify;text-justify:inter-character;">回滚</div>
<div class="t" id="s2t" style="left:715.33px;top:232.9px;font-size:12.45px;color:#1f1f1f;-webkit-text-stroke:0.3px #1f1f1f;width:49.5px;text-align:justify;text-align-last:justify;text-justify:inter-character;">镜像分发</div>
<div class="t" id="s2n" style="left:746.9px;top:268.2px;font-size:12.6px;color:#363636;letter-spacing:-0.2px;">image-distribute</div>
<div class="t" id="s2d2" style="left:872.74px;top:268.3px;font-size:11.6px;color:#8a8a8a;">秒</div>
<div class="t" id="s2d1" style="left:863.61px;top:268.2px;font-size:11.2px;color:#8a8a8a;">5</div>
<div class="t" id="s3t" style="left:978.51px;top:232.9px;font-size:12.45px;color:#1f1f1f;-webkit-text-stroke:0.3px #1f1f1f;width:74.0px;text-align:justify;text-align-last:justify;text-justify:inter-character;">部署北美集群</div>
<div class="t" id="s3n" style="left:1010.52px;top:267.8px;font-size:12.6px;color:#363636;letter-spacing:-0.339px;">deploy-env-dev1</div>
<div class="t" id="s3d2" style="left:1135.84px;top:267.9px;font-size:11.6px;color:#8a8a8a;">秒</div>
<div class="t" id="s3d1" style="left:1127.18px;top:267.8px;font-size:11.2px;color:#8a8a8a;">4</div>
<div class="t" id="s3s" style="left:1010.51px;top:285.0px;font-size:12px;color:#7a7a7a;letter-spacing:-0.45px;">service2</div>
<div class="t" id="s3r" style="left:1126.1px;top:302.5px;font-size:11.2px;color:#1a5aff;width:21.6px;text-align:justify;text-align-last:justify;text-justify:inter-character;">回滚</div>
</div>
</body>
</html>
